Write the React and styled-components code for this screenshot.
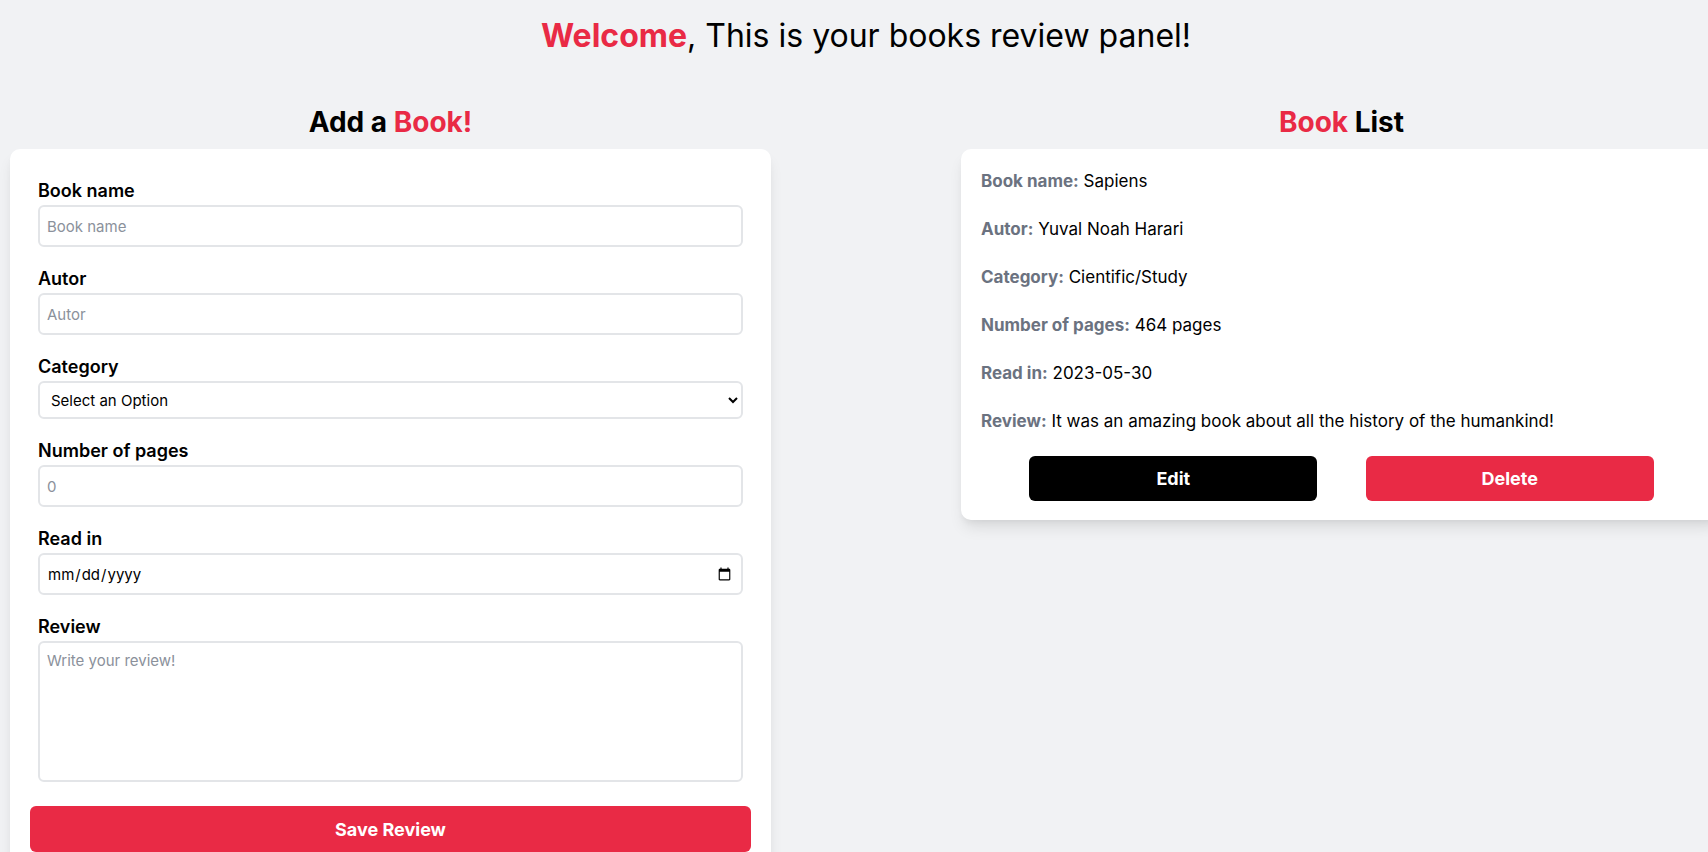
import React, { useState } from 'react';
import styled, { createGlobalStyle } from 'styled-components';

const RED = '#e92a45';

const GlobalStyle = createGlobalStyle`
  html, body {
    margin: 0;
    padding: 0;
    overflow: hidden;
    background: #f1f2f4;
    font-family: 'Inter', 'Noto Sans', sans-serif;
    color: #000;
  }
  * { box-sizing: border-box; }
`;

const Page = styled.div`
  width: 1732px;
  padding: 16px 10px 0;
`;

const Heading = styled.h1`
  margin: 0;
  text-align: center;
  font-size: 32px;
  line-height: 40px;
  font-weight: 400;
`;

const Accent = styled.span`
  color: ${RED};
  font-weight: 700;
`;

const Columns = styled.div`
  display: grid;
  grid-template-columns: 761px 761px;
  justify-content: space-between;
  margin-top: 48px;
`;

const Column = styled.section`
  display: flex;
  flex-direction: column;
`;

const SectionTitle = styled.h2`
  margin: 0 0 9px;
  text-align: center;
  font-size: 28px;
  line-height: 36px;
  font-weight: 700;
`;

const Red = styled.span`
  color: ${RED};
`;

const Card = styled.div`
  background: #fff;
  border-radius: 10px;
  box-shadow: 0 10px 15px -3px rgba(0, 0, 0, 0.1), 0 4px 6px -2px rgba(0, 0, 0, 0.05);
`;

const Form = styled(Card).attrs({ as: 'form' })`
  padding: 27px 20px 20px;
`;

const Field = styled.div`
  padding: 0 8px;
  margin-bottom: ${(p) => (p.$last ? 24 : 17)}px;
`;

const Label = styled.label`
  display: block;
  font-size: 18px;
  line-height: 29px;
  font-weight: 600;
`;

const inputBase = `
  display: block;
  width: 100%;
  border: 2px solid #e3e5e8;
  border-radius: 6px;
  font-family: 'Inter', 'Noto Sans', sans-serif;
  font-size: 15px;
  color: #000;
  background: #fff;
  outline: none;
  &::placeholder { color: #8b919b; }
`;

const Input = styled.input`
  ${inputBase}
  height: 42px;
  padding: 0 7px;
`;

const Select = styled.select`
  ${inputBase}
  height: 38px;
  padding: 0 7px;
`;

const TextArea = styled.textarea`
  ${inputBase}
  height: 141px;
  padding: 8px 7px;
  resize: none;
`;

const SaveButton = styled.button`
  display: block;
  width: 100%;
  height: 46px;
  border: none;
  border-radius: 6px;
  background: ${RED};
  color: #fff;
  font-family: 'Inter', 'Noto Sans', sans-serif;
  font-size: 18px;
  font-weight: 700;
`;

const ListCard = styled(Card)`
  padding: 20px 20px 19px;
  display: flex;
  flex-direction: column;
  gap: 24px;
`;

const Row = styled.p`
  margin: 0;
  font-size: 17px;
  line-height: 24px;
`;

const Key = styled.span`
  color: #6b7280;
  font-weight: 700;
`;

const Actions = styled.div`
  display: flex;
  justify-content: space-evenly;
  margin-top: -1px;
`;

const ActionButton = styled.button`
  width: 40%;
  height: 45px;
  border: none;
  border-radius: 6px;
  background: ${(p) => (p.$danger ? RED : '#000')};
  color: #fff;
  font-family: 'Inter', 'Noto Sans', sans-serif;
  font-size: 18px;
  font-weight: 700;
`;

const books = [
  {
    name: 'Sapiens',
    autor: 'Yuval Noah Harari',
    category: 'Cientific/Study',
    pages: 464,
    readIn: '2023-05-30',
    review: 'It was an amazing book about all the history of the humankind!',
  },
];

const App = () => {
  const [form, setForm] = useState({ name: '', autor: '', category: '', pages: '', readIn: '', review: '' });
  const set = (k) => (e) => setForm({ ...form, [k]: e.target.value });

  return (
    <>
      <GlobalStyle />
      <Page>
        <Heading>
          <Accent>Welcome</Accent>, This is your books review panel!
        </Heading>

        <Columns>
          <Column>
            <SectionTitle>
              Add a <Red>Book!</Red>
            </SectionTitle>
            <Form onSubmit={(e) => e.preventDefault()}>
              <Field>
                <Label>Book name</Label>
                <Input type="text" placeholder="Book name" value={form.name} onChange={set('name')} />
              </Field>
              <Field>
                <Label>Autor</Label>
                <Input type="text" placeholder="Autor" value={form.autor} onChange={set('autor')} />
              </Field>
              <Field>
                <Label>Category</Label>
                <Select value={form.category} onChange={set('category')}>
                  <option value="">Select an Option</option>
                  <option value="fiction">Fiction</option>
                  <option value="study">Cientific/Study</option>
                </Select>
              </Field>
              <Field>
                <Label>Number of pages</Label>
                <Input type="number" placeholder="0" value={form.pages} onChange={set('pages')} />
              </Field>
              <Field>
                <Label>Read in</Label>
                <Input type="date" value={form.readIn} onChange={set('readIn')} />
              </Field>
              <Field $last>
                <Label>Review</Label>
                <TextArea placeholder="Write your review!" value={form.review} onChange={set('review')} />
              </Field>
              <SaveButton type="submit">Save Review</SaveButton>
            </Form>
          </Column>

          <Column>
            <SectionTitle>
              <Red>Book</Red> List
            </SectionTitle>
            {books.map((b) => (
              <ListCard key={b.name}>
                <Row><Key>Book name:</Key> {b.name}</Row>
                <Row><Key>Autor:</Key> {b.autor}</Row>
                <Row><Key>Category:</Key> {b.category}</Row>
                <Row><Key>Number of pages:</Key> {b.pages} pages</Row>
                <Row><Key>Read in:</Key> {b.readIn}</Row>
                <Row><Key>Review:</Key> {b.review}</Row>
                <Actions>
                  <ActionButton>Edit</ActionButton>
                  <ActionButton $danger>Delete</ActionButton>
                </Actions>
              </ListCard>
            ))}
          </Column>
        </Columns>
      </Page>
    </>
  );
};

export default App;
